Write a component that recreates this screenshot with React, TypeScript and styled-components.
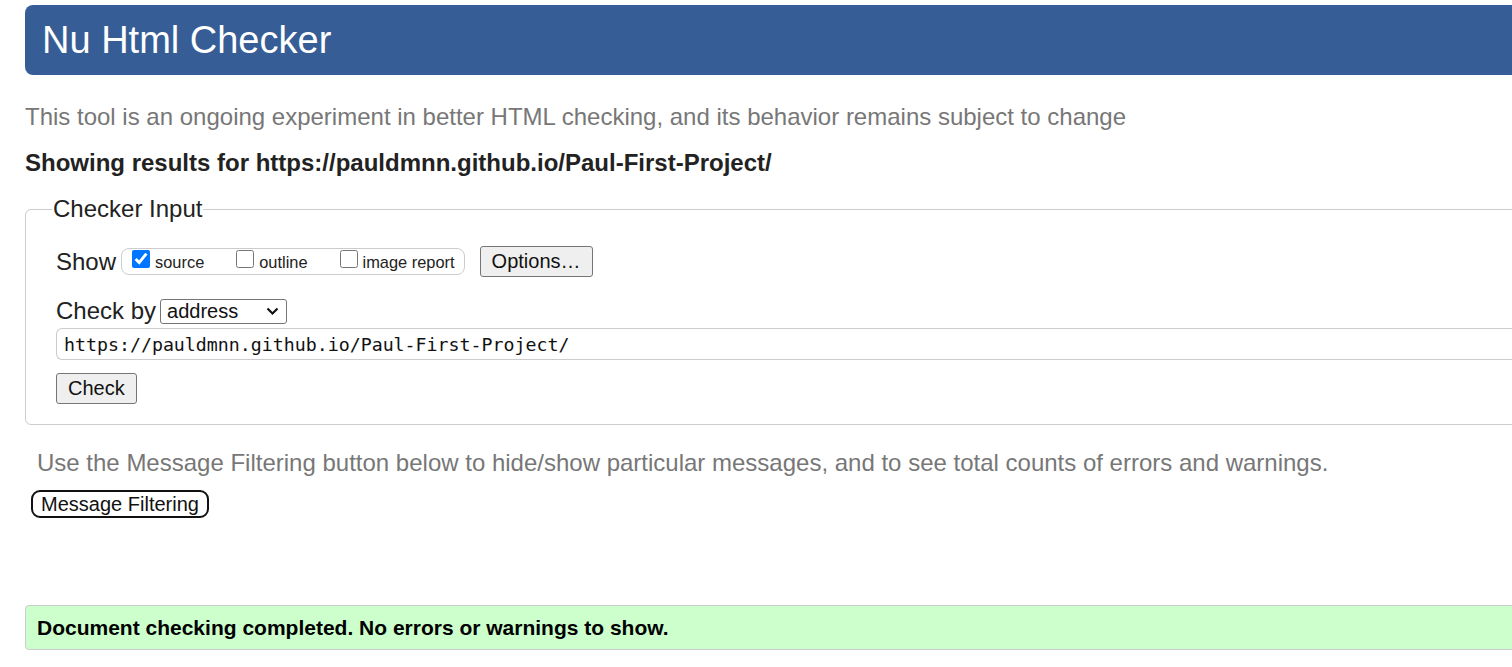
import React from "react";
import styled, { createGlobalStyle } from "styled-components";

const Global = createGlobalStyle`
  html, body { margin: 0; padding: 0; background: #fff; overflow: hidden; }
  body { font-family: "Liberation Sans", Arial, sans-serif; color: #222; }
`;

const Page = styled.div`
  width: 1600px;
  padding: 5px 0 0 25px;
  box-sizing: border-box;
`;

const Header = styled.header`
  background: #365d95;
  border-radius: 8px;
  height: 70px;
  display: flex;
  align-items: center;
  padding-left: 17px;
`;

const Title = styled.h1`
  margin: 0;
  color: #fff;
  font-weight: normal;
  font-size: 38px;
  line-height: 1;
`;

const Intro = styled.p`
  margin: 28px 0 0;
  color: #777;
  font-size: 24px;
  line-height: 28px;
`;

const Results = styled.p`
  margin: 18px 0 0;
  font-weight: bold;
  font-size: 24px;
  line-height: 28px;
  color: #222;
`;

const Fieldset = styled.fieldset`
  margin: 18px 0 0;
  border: 1px solid #ccc;
  border-radius: 6px;
  padding: 23px 0 20px 30px;
`;

const Legend = styled.legend`
  font-size: 24px;
  line-height: 28px;
  padding: 0 1px;
  margin-left: -4px;
  color: #222;
`;

const Row = styled.div<{ $mb?: number; $gap?: number }>`
  display: flex;
  align-items: center;
  gap: ${(p) => p.$gap ?? 6}px;
  font-size: 24px;
  line-height: 28px;
  color: #222;
  margin-bottom: ${(p) => p.$mb ?? 0}px;
`;

const Toggles = styled.div`
  display: flex;
  align-items: center;
  border: 1px solid #ccc;
  border-radius: 8px;
  height: 25px;
  padding: 0 9px 0 10px;
  gap: 32px;
  margin-left: -1px;
`;

const ToggleLabel = styled.label`
  display: flex;
  align-items: center;
  font-size: 16.4px;
  line-height: 20px;
  color: #222;
  gap: 5px;
`;

const Box = styled.input`
  width: 18px;
  height: 18px;
  margin: 0 0 5px;
  accent-color: #0075ff;
`;

const Btn = styled.button<{ $ml?: number }>`
  font-family: "Liberation Sans", Arial, sans-serif;
  font-size: 20px;
  background: #efefef;
  border: 1px solid #767676;
  border-radius: 3px;
  color: #111;
  padding: 0 11px;
  height: 31px;
  line-height: 29px;
  margin-left: ${(p) => p.$ml ?? 0}px;
`;

const SelectWrap = styled.div`
  position: relative;
  display: inline-flex;
  margin-left: -1px;
`;

const Select = styled.select`
  appearance: none;
  font-family: "Liberation Sans", Arial, sans-serif;
  font-size: 20px;
  width: 127px;
  height: 25px;
  border: 1px solid #767676;
  border-radius: 3px;
  background: #fff;
  color: #111;
  padding: 0 6px;
  line-height: 23px;
`;

const Chevron = styled.svg`
  position: absolute;
  right: 8px;
  top: 8px;
  width: 13px;
  height: 9px;
  pointer-events: none;
`;

const UrlInput = styled.input`
  display: block;
  width: 100%;
  box-sizing: border-box;
  height: 32px;
  border: 1px solid #ccc;
  border-right: none;
  border-radius: 6px 0 0 6px;
  font-family: "DejaVu Sans Mono", "Liberation Mono", monospace;
  font-size: 18.25px;
  padding: 0 7px;
  color: #111;
  margin: 3px 0 13px;
`;

const Note = styled.p`
  margin: 24px 0 0 12px;
  color: #777;
  font-size: 24px;
  line-height: 28px;
`;

const FilterBtn = styled.button`
  display: block;
  font-family: "Liberation Sans", Arial, sans-serif;
  font-size: 20px;
  margin: 13px 0 0 6px;
  background: #fff;
  border: 2px solid #111;
  border-radius: 9px;
  color: #111;
  padding: 0 8px;
  width: 178px;
  height: 28px;
  line-height: 24px;
`;

const Status = styled.div`
  margin-top: 87px;
  background: #ccffcc;
  border: 1px solid #ccc;
  border-radius: 4px;
  height: 43px;
  display: flex;
  align-items: center;
  padding-left: 11px;
  font-weight: bold;
  font-size: 21px;
  color: #000;
`;

export default function App() {
  return (
    <>
      <Global />
      <Page>
        <Header>
          <Title>Nu Html Checker</Title>
        </Header>
        <Intro>This tool is an ongoing experiment in better HTML checking, and its behavior remains subject to change</Intro>
        <Results>Showing results for https://pauldmnn.github.io/Paul-First-Project/</Results>
        <Fieldset>
          <Legend>Checker Input</Legend>
          <Row $mb={20}>
            <span>Show</span>
            <Toggles>
              <ToggleLabel><Box type="checkbox" defaultChecked />source</ToggleLabel>
              <ToggleLabel><Box type="checkbox" />outline</ToggleLabel>
              <ToggleLabel><Box type="checkbox" />image report</ToggleLabel>
            </Toggles>
            <Btn $ml={9}>Options…</Btn>
          </Row>
          <Row $gap={5}>
            <span>Check by</span>
            <SelectWrap>
              <Select defaultValue="address">
                <option value="address">address</option>
                <option value="file">file upload</option>
                <option value="text">text input</option>
              </Select>
              <Chevron viewBox="0 0 13 9">
                <path d="M1.5 1.5 L6.5 6.5 L11.5 1.5" fill="none" stroke="#111" strokeWidth="2.2" />
              </Chevron>
            </SelectWrap>
          </Row>
          <UrlInput defaultValue="https://pauldmnn.github.io/Paul-First-Project/" />
          <Btn>Check</Btn>
        </Fieldset>
        <Note>Use the Message Filtering button below to hide/show particular messages, and to see total counts of errors and warnings.</Note>
        <FilterBtn>Message Filtering</FilterBtn>
        <Status>Document checking completed. No errors or warnings to show.</Status>
      </Page>
    </>
  );
}
